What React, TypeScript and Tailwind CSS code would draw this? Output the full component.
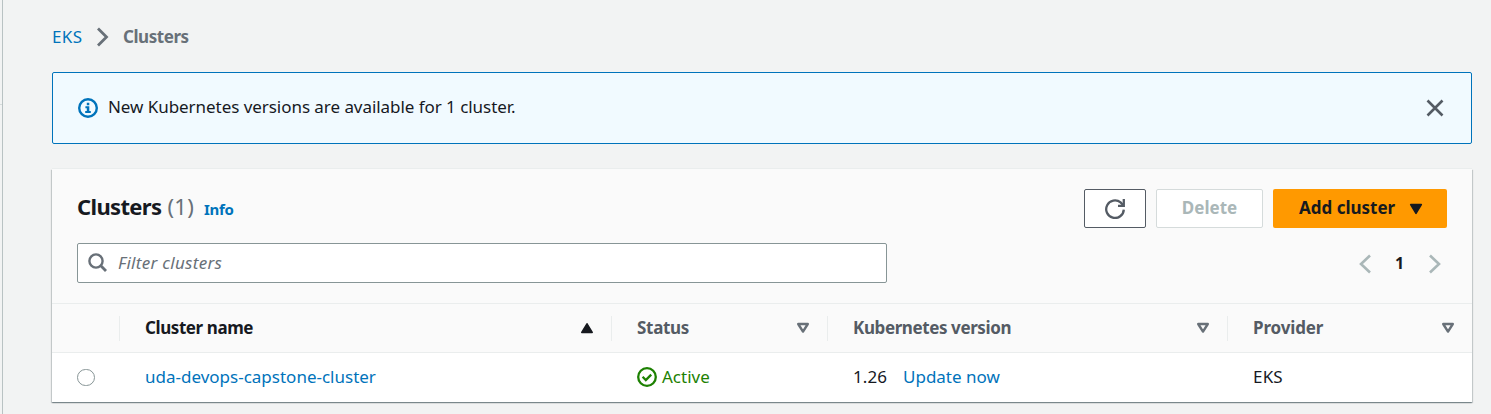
import type { ReactNode } from "react";

function SortIcon({ active = false }: { active?: boolean }) {
  return active ? (
    <svg width="14" height="12" viewBox="0 0 14 12" className="shrink-0">
      <path d="M7 1.8 12.2 10.4H1.8Z" fill="#16191f" stroke="#16191f" strokeWidth="1.6" strokeLinejoin="round" />
    </svg>
  ) : (
    <svg width="14" height="12" viewBox="0 0 14 12" className="shrink-0">
      <path d="M7 9.6 2.2 2H11.8Z" fill="none" stroke="#687078" strokeWidth="2.4" strokeLinejoin="round" />
    </svg>
  );
}

function HeaderCell({ children, active, last }: { children: ReactNode; active?: boolean; last?: boolean }) {
  return (
    <div
      className={
        "flex h-[25px] items-center justify-between pl-[25px] pr-[17px] " +
        (last ? "" : "border-r border-[#eaeded] ") +
        (active ? "text-[#16191f]" : "text-[#545b64]")
      }
    >
      {children}
      <SortIcon active={active} />
    </div>
  );
}

export default function App() {
  return (
    <div className="flex h-[414px] w-[1491px] overflow-hidden bg-[#f2f3f3] font-['Noto_Sans',sans-serif] text-[17px] leading-[25px] text-[#16191f]">
      <div className="w-[3px] shrink-0 border-r border-[#b9c2c3] pt-[104px]">
        <div className="h-px bg-[#d5dbdb]" />
      </div>
      <main className="flex w-[1420px] shrink-0 flex-col ml-[49px]">
        <nav className="flex h-[72px] items-center pt-px">
          <a className="w-[45px] tracking-[0.4px] text-[#0073bb]">EKS</a>
          <svg width="12" height="20" viewBox="0 0 12 20" className="mt-px">
            <path d="M1 1.5 9.5 10 1 18.5" fill="none" stroke="#687078" strokeWidth="2.8" />
          </svg>
          <span className="ml-[14px] font-bold tracking-[-0.45px] text-[#687078]">Clusters</span>
        </nav>

        <section className="flex h-[72px] shrink-0 items-center rounded-[2px] border border-[#0073bb] bg-[#f1faff] pl-[25px] pr-[27px]">
          <svg width="20" height="20" viewBox="0 0 20 20" className="shrink-0">
            <circle cx="10" cy="10" r="8.8" fill="none" stroke="#0073bb" strokeWidth="2.4" />
            <path d="M8.8 4.8h2.5v2.4H8.8ZM7.4 8.2h3.9v4.8h1.5v2H7.2v-2h1.6v-2.8H7.4Z" fill="#0073bb" />
          </svg>
          <span className="ml-[10px] tracking-[-0.05px] whitespace-nowrap pb-[3px]">New Kubernetes versions are available for 1 cluster.</span>
          <svg width="18" height="18" viewBox="0 0 18 18" className="ml-auto">
            <path d="M1.5 1.5 16.5 16.5M16.5 1.5 1.5 16.5" stroke="#545b64" strokeWidth="2.6" />
          </svg>
        </section>

        <section className="mt-[25px] flex h-[233px] shrink-0 flex-col bg-[#fafafa] shadow-[0_1px_1px_0_rgba(0,28,36,0.3),1px_1px_1px_0_rgba(0,28,36,0.15),-1px_1px_1px_0_rgba(0,28,36,0.15),0_-1px_0_0_#eaeded]">
          <header className="flex h-[134px] flex-col px-[25px] pt-[20px]">
            <div className="flex h-[39px] items-center">
              <h1 className="text-[22px] font-bold tracking-[-0.65px] pb-[4px]">Clusters</h1>
              <span className="ml-[6px] text-[22px] tracking-[0.3px] text-[#687078] pb-[4px]">(1)</span>
              <a className="ml-[10px] mt-px text-[15px] font-bold tracking-[-0.35px] text-[#0073bb]">Info</a>
              <div className="ml-auto flex gap-[10px] font-bold">
                <button className="flex h-[39px] w-[62px] items-center justify-center rounded-[2px] border border-[#545b64] bg-white">
                  <svg width="20" height="20" viewBox="0 0 20 20">
                    <path d="M18.8 10.6A8.8 8.8 0 1 1 15.6 3.4L18 6" fill="none" stroke="#545b64" strokeWidth="2.3" />
                    <path d="M18.8 0V6.8H13" fill="none" stroke="#545b64" strokeWidth="2.3" />
                  </svg>
                </button>
                <button className="flex h-[39px] w-[107px] items-center justify-center rounded-[2px] border border-[#d5dbdb] bg-white pb-[2px] text-[#aab7b8]">
                  Delete
                </button>
                <button className="flex h-[39px] w-[174px] items-center rounded-[2px] bg-[#ff9900] pl-[26px]">
                  <span className="w-[110px] whitespace-nowrap pb-[2px] text-left">Add cluster</span>
                  <svg width="14" height="12" viewBox="0 0 14 12">
                    <path d="M7 10.4 1.7 1.6H12.3Z" fill="#16191f" stroke="#16191f" strokeWidth="1.6" strokeLinejoin="round" />
                  </svg>
                </button>
              </div>
            </div>
            <div className="mt-[15px] flex items-center">
              <div className="flex h-[40px] w-[810px] items-center rounded-[2px] border border-[#879596] bg-white pl-[10px]">
                <svg width="20" height="20" viewBox="0 0 20 20">
                  <circle cx="8" cy="8" r="6.6" fill="none" stroke="#687078" strokeWidth="2.4" />
                  <path d="M12.6 12.6 18 18" stroke="#687078" strokeWidth="2.8" />
                </svg>
                <span className="ml-[10px] italic tracking-[0.3px] text-[#687078] pb-[2px]">Filter clusters</span>
              </div>
              <div className="ml-auto flex items-center pr-[6px] pt-[2px]">
                <svg width="12" height="20" viewBox="0 0 12 20">
                  <path d="M11 1.5 2 10 11 18.5" fill="none" stroke="#aab7b8" strokeWidth="2.6" />
                </svg>
                <span className="w-[57px] text-center text-[16px] font-bold pb-[2px]">1</span>
                <svg width="12" height="20" viewBox="0 0 12 20" className="ml-px">
                  <path d="M1 1.5 10 10 1 18.5" fill="none" stroke="#aab7b8" strokeWidth="2.6" />
                </svg>
              </div>
            </div>
          </header>

          <div className="grid h-[50px] grid-cols-[68px_492px_216px_400px_244px] items-center border-y border-[#eaeded] font-bold">
            <div className="h-[25px] border-r border-[#eaeded]" />
            <HeaderCell active><span className="pb-px tracking-[-0.42px]">Cluster name</span></HeaderCell>
            <HeaderCell><span className="pb-px tracking-[-0.3px]">Status</span></HeaderCell>
            <HeaderCell><span className="pb-px tracking-[-0.4px]">Kubernetes version</span></HeaderCell>
            <HeaderCell last><span className="pb-px tracking-[-0.15px]">Provider</span></HeaderCell>
          </div>

          <div className="grid h-[49px] grid-cols-[68px_492px_216px_400px_244px] items-center bg-white">
            <div className="pl-[25px]">
              <div className="h-[17px] w-[18px] rounded-full border border-[#879596] bg-white" />
            </div>
            <a className="pl-[25px] pb-[2px] text-[#0073bb]">uda-devops-capstone-cluster</a>
            <div className="flex items-center pl-[25px] pb-[2px] text-[#1d8102]">
              <svg width="20" height="20" viewBox="0 0 20 20">
                <circle cx="10" cy="10" r="8.8" fill="none" stroke="#1d8102" strokeWidth="2.3" />
                <path d="M5.6 9.8 8.8 13 14.2 7.6" fill="none" stroke="#1d8102" strokeWidth="2.3" />
              </svg>
              <span className="ml-[5px]">Active</span>
            </div>
            <div className="flex pl-[25px] pb-[2px]">
              <span className="w-[50px] tracking-[0.1px]">1.26</span>
              <a className="text-[#0073bb]">Update now</a>
            </div>
            <span className="pl-[25px] pb-[2px] tracking-[0.2px]">EKS</span>
          </div>
        </section>
      </main>
    </div>
  );
}
